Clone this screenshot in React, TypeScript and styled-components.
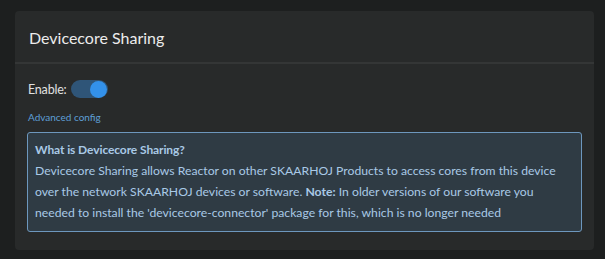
import React from "react";
import styled, { createGlobalStyle } from "styled-components";

const Global = createGlobalStyle`
  html, body { margin: 0; padding: 0; background: #1d1f1f; }
  body { font-family: Lato, "Noto Sans", sans-serif; }
  * { box-sizing: border-box; }
`;

const Page = styled.div`
  width: 605px;
  height: 259px;
  padding: 11px 11px 0 15px;
  background: #1d1f1f;
`;

const Card = styled.section`
  background: #282a2a;
  border-radius: 4px;
  height: 239px;
  display: flex;
  flex-direction: column;
`;

const Header = styled.header`
  height: 53px;
  padding: 1px 14px 0 14px;
  display: flex;
  align-items: center;
  border-bottom: 2px solid #343636;
`;

const Title = styled.h2`
  margin: 0;
  font-size: 16px;
  font-weight: 400;
  color: #ececec;
`;

const Body = styled.div`
  padding: 15px 12px 0 13px;
  display: flex;
  flex-direction: column;
`;

const Row = styled.div`
  display: flex;
  align-items: center;
  gap: 4px;
  height: 20px;
`;

const Label = styled.span`
  font-size: 12.5px;
  letter-spacing: -0.2px;
  color: #e0e0e0;
`;

const Toggle = styled.span<{ $on: boolean }>`
  position: relative;
  width: 37px;
  height: 18px;
  border-radius: 9px;
  background: ${(p) => (p.$on ? "#2f5578" : "#444")};
  display: inline-block;
`;

const Knob = styled.span<{ $on: boolean }>`
  position: absolute;
  top: 0.5px;
  left: ${(p) => (p.$on ? "19px" : "1px")};
  width: 17px;
  height: 17px;
  border-radius: 50%;
  background: #3391ea;
`;

const Link = styled.a`
  margin-top: 12px;
  font-size: 10px;
  line-height: 13px;
  color: #5e9fd6;
  text-decoration: none;
`;

const Info = styled.div`
  margin-top: 8px;
  margin-left: -1px;
  width: 555px;
  border: 1px solid #6d97bd;
  border-radius: 3px;
  background: #2f3b44;
  padding: 6px 7px 8px 7px;
  color: #a9c9e6;
  font-size: 12.2px;
  line-height: 21px;
  white-space: nowrap;
`;

const InfoTitle = styled.div`
  font-weight: 700;
  font-size: 12px;
  letter-spacing: -0.1px;
`;

const Strong = styled.b`
  font-weight: 700;
`;

export default function App() {
  return (
    <>
      <Global />
      <Page>
        <Card>
          <Header>
            <Title>Devicecore Sharing</Title>
          </Header>
          <Body>
            <Row>
              <Label>Enable:</Label>
              <Toggle $on={true}>
                <Knob $on={true} />
              </Toggle>
            </Row>
            <Link href="#">Advanced config</Link>
            <Info>
              <InfoTitle>What is Devicecore Sharing?</InfoTitle>
              Devicecore Sharing allows Reactor on other SKAARHOJ Products to access cores from this device
              <br />
              over the network SKAARHOJ devices or software. <Strong>Note:</Strong> In older versions of our
              software you
              <br />
              needed to install the 'devicecore-connector' package for this, which is no longer needed
            </Info>
          </Body>
        </Card>
      </Page>
    </>
  );
}
